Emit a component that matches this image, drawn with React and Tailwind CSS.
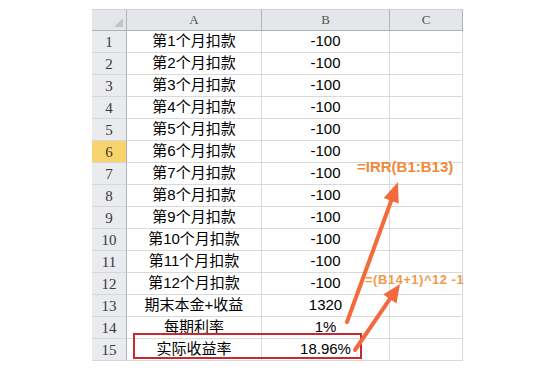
import React from "react";

const rowsA = [
  "第1个月扣款","第2个月扣款","第3个月扣款","第4个月扣款","第5个月扣款","第6个月扣款",
  "第7个月扣款","第8个月扣款","第9个月扣款","第10个月扣款","第11个月扣款","第12个月扣款",
  "期末本金+收益","每期利率","实际收益率",
];
const rowsB = ["-100","-100","-100","-100","-100","-100","-100","-100","-100","-100","-100","-100","1320","1%","18.96%"];

const cjk = { fontFamily: '"Liberation Sans", "Noto Sans CJK SC", sans-serif' };
const serif = { fontFamily: '"Liberation Serif", "DejaVu Serif", serif' };

export default function App() {
  return (
    <div className="relative w-[547px] h-[372px] bg-white overflow-hidden">
      <div className="pt-[9px] pl-[92px]">
        <div className="grid grid-cols-[35px_135px_128px_73px] grid-rows-[21px_repeat(15,22px)] w-[371px] border-t border-[#d0d3d8]">
          {/* header */}
          <div className="relative bg-[#e4e6ea] border-r border-b border-[#aeb3ba]">
            <div className="absolute right-[3px] bottom-[3px] w-0 h-0 border-l-[9px] border-l-transparent border-b-[9px] border-b-[#c2c5c9]" />
          </div>
          {["A", "B", "C"].map((h) => (
            <div key={h} style={serif} className="bg-[#e4e6ea] border-r border-b border-[#aeb3ba] flex items-center justify-center text-[13px] text-[#555]">
              {h}
            </div>
          ))}
          {rowsA.map((a, i) => (
            <React.Fragment key={i}>
              <div
                style={serif}
                className={`${i === 5 ? "bg-[#f8d56c]" : "bg-[#e9ebee]"} border-r border-r-[#aeb3ba] border-b border-b-[#d4d7db] flex items-end justify-center pb-[1px] text-[15px] leading-[18px] text-[#3a3a3a]`}
              >
                {i + 1}
              </div>
              <div style={cjk} className="border-r border-b border-[#d9d9d9] flex items-center justify-center text-[15px] text-black">
                {a}
              </div>
              <div style={cjk} className="border-r border-b border-[#d9d9d9] flex items-center justify-center text-[15px] text-black">
                {rowsB[i]}
              </div>
              <div className="border-r border-b border-[#d9d9d9]" />
            </React.Fragment>
          ))}
        </div>
      </div>

      {/* red highlight box */}
      <div className="absolute left-[133px] top-[333px] w-[229px] h-[26px] border-2 border-[#c8282e]" />

      {/* annotations */}
      <div style={cjk} className="absolute left-[357px] top-[158px] text-[15px] leading-[18px] font-bold text-[#ef8a3a]">
        =IRR(B1:B13)
      </div>
      <div style={cjk} className="absolute left-[365px] top-[272px] text-[13px] leading-[16px] font-bold tracking-[0.5px] text-[#f09a4c]">
        =(B14+1)^12 -1
      </div>

      <svg className="absolute inset-0" width="547" height="372" viewBox="0 0 547 372">
        <line x1="347" y1="322" x2="391.2" y2="200.8" stroke="#f36a3c" strokeWidth="4" strokeLinecap="round" />
        <polygon points="398,182 398.7,203.5 383.7,198.1" fill="#f36a3c" />
        <line x1="355" y1="350" x2="389.9" y2="298.9" stroke="#f36a3c" strokeWidth="4" strokeLinecap="round" />
        <polygon points="400,284 396.5,303.4 383.3,294.4" fill="#f36a3c" />
      </svg>
    </div>
  );
}
